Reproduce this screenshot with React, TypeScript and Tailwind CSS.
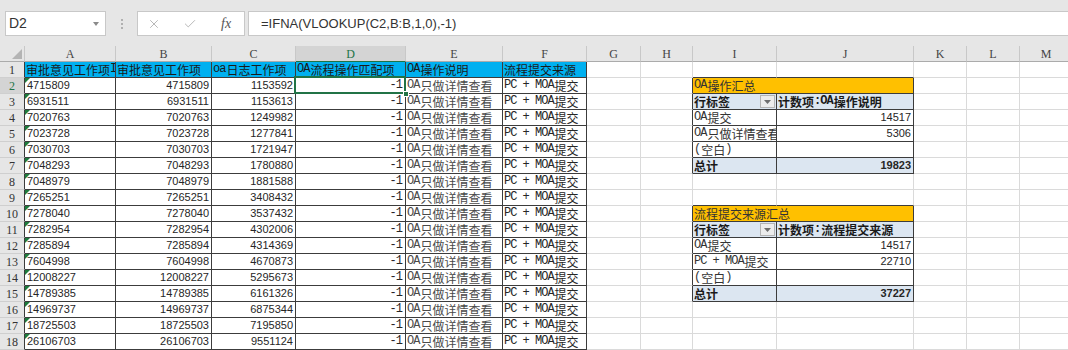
import { X, Check } from "lucide-react";

type PRow = { kind: "title" | "head" | "body" | "total"; a: string; b?: string };

const data: [string, string, string][] = [
  ["4715809", "4715809", "1153592"],
  ["6931511", "6931511", "1153613"],
  ["7020763", "7020763", "1249982"],
  ["7023728", "7023728", "1277841"],
  ["7030703", "7030703", "1721947"],
  ["7048293", "7048293", "1780880"],
  ["7048979", "7048979", "1881588"],
  ["7265251", "7265251", "3408432"],
  ["7278040", "7278040", "3537432"],
  ["7282954", "7282954", "4302006"],
  ["7285894", "7285894", "4314369"],
  ["7604998", "7604998", "4670873"],
  ["12008227", "12008227", "5295673"],
  ["14789385", "14789385", "6161326"],
  ["14969737", "14969737", "6875344"],
  ["18725503", "18725503", "7195850"],
  ["26106703", "26106703", "9551124"],
];

const headers = ["审批意见工作项ID", "审批意见工作项", "oa日志工作项", "OA流程操作匹配项", "OA操作说明", "流程提交来源"];
const letters = ["A", "B", "C", "D", "E", "F", "G", "H", "I", "J", "K", "L", "M"];

const pivot: Record<number, PRow> = {
  2: { kind: "title", a: "OA操作汇总" },
  3: { kind: "head", a: "行标签", b: "计数项:OA操作说明" },
  4: { kind: "body", a: "OA提交", b: "14517" },
  5: { kind: "body", a: "OA只做详情查看", b: "5306" },
  6: { kind: "body", a: "(空白)", b: "" },
  7: { kind: "total", a: "总计", b: "19823" },
  10: { kind: "title", a: "流程提交来源汇总" },
  11: { kind: "head", a: "行标签", b: "计数项:流程提交来源" },
  12: { kind: "body", a: "OA提交", b: "14517" },
  13: { kind: "body", a: "PC + MOA提交", b: "22710" },
  14: { kind: "body", a: "(空白)", b: "" },
  15: { kind: "total", a: "总计", b: "37227" },
};

const gridCols =
  "grid grid-cols-[25px_91px_96px_84px_110px_97px_84px_54px_52px_84px_137px_53px_53px_53px]";
const cjk = "font-['Noto_Sans_CJK_SC',sans-serif] text-[12px] leading-[15px]";
const num = "font-['Liberation_Sans',Arial,sans-serif] text-[11px] leading-[15px]";
const base = "relative flex items-end whitespace-nowrap h-[16px] border-r border-b";

// SimSun style: half-width latin runs, full-width CJK
const Song = ({ t }: { t: string }) => (
  <>
    {t
      .split(/([\x20-\x7e]+)/)
      .filter(Boolean)
      .map((p, i) =>
        /^[\x20-\x7e]+$/.test(p) ? (
          <span
            key={i}
            className="font-['Liberation_Mono',monospace] text-[12px] tracking-[-1px] mr-[1px] whitespace-pre"
          >
            {p}
          </span>
        ) : (
          <span key={i}>{p}</span>
        )
      )}
  </>
);

const Row = ({ r }: { r: number }) => {
  const cells = [];
  const p = pivot[r];
  cells.push(
    <div
      key="h"
      className={`h-[16px] border-r border-b border-r-[#3c3c3c] border-b-[#cfcfcf] flex items-center justify-center font-['Liberation_Serif',serif] text-[12px] ${
        r === 2 ? "bg-[#d4d4d4] text-[#217346]" : "bg-[#e6e6e6] text-[#333]"
      }`}
    >
      {r}
    </div>
  );
  for (let c = 1; c <= 13; c++) {
    const rightDark = c <= 6 || (!!p && (c === 8 || c === 9 || c === 10));
    const bottomDark = c <= 6 || ((c === 9 || c === 10) && ((r >= 1 && r <= 7) || (r >= 9 && r <= 15)));
    const bc = `${rightDark ? "border-r-[#3c3c3c]" : "border-r-[#dadada]"} ${
      bottomDark ? "border-b-[#3c3c3c]" : "border-b-[#dadada]"
    }`;

    if (r === 1 && c <= 6) {
      cells.push(
        <div key={c} className={`${base} ${bc} overflow-hidden bg-[#00b0f0] pl-[1px] text-[#1a1a1a] ${cjk}`}>
          <Song t={headers[c - 1]} />
        </div>
      );
      continue;
    }

    if (r >= 2 && c <= 6) {
      const d = data[r - 2];
      if (c === 1) {
        cells.push(
          <div key={c} className={`${base} ${bc} overflow-hidden pl-[2px] text-[#262626] ${num}`}>
            <span className="absolute left-0 top-0 w-0 h-0 border-t-[5px] border-t-[#1e7b3c] border-r-[5px] border-r-transparent" />
            {d[0]}
          </div>
        );
      } else if (c === 2 || c === 3) {
        cells.push(
          <div key={c} className={`${base} ${bc} overflow-hidden justify-end pr-[2px] text-[#262626] ${num}`}>
            {d[c - 1]}
          </div>
        );
      } else if (c === 4) {
        cells.push(
          <div
            key={c}
            className={`${base} ${bc} justify-end pr-[2px] text-[#262626] ${cjk} ${r === 2 ? "z-10" : "overflow-hidden"}`}
          >
            <Song t="-1" />
            {r === 2 && (
              <>
                <span className="absolute left-[-2px] top-[-2px] right-[-1px] bottom-[-1px] border-2 border-[#217346]" />
                <span className="absolute right-[-4px] bottom-[-4px] w-[6px] h-[6px] bg-[#217346] border border-white" />
              </>
            )}
          </div>
        );
      } else if (c === 5) {
        cells.push(
          <div key={c} className={`${base} ${bc} overflow-hidden pl-[1px] text-[#4a4a4a] ${cjk}`}>
            <Song t="OA只做详情查看" />
          </div>
        );
      } else {
        cells.push(
          <div key={c} className={`${base} ${bc} overflow-hidden pl-[1px] text-[#262626] ${cjk}`}>
            <Song t="PC + MOA提交" />
          </div>
        );
      }
      continue;
    }

    if (p && c === 9) {
      if (p.kind === "title") {
        cells.push(
          <div
            key={c}
            className={`${base} border-r-[#3c3c3c] border-b-[#3c3c3c] col-span-2 overflow-hidden bg-[#ffc000] pl-[1px] text-[#333] ${cjk}`}
          >
            <Song t={p.a} />
          </div>
        );
        c++;
        continue;
      }
      const shaded = p.kind === "head" || p.kind === "total";
      cells.push(
        <div
          key={c}
          className={`${base} ${bc} overflow-hidden pl-[1px] ${shaded ? "bg-[#dce6f1] font-bold text-[#1a1a1a]" : "text-[#333]"} ${cjk}`}
        >
          <Song t={p.a} />
          {p.kind === "head" && (
            <span className="absolute right-[1px] top-[1px] w-[15px] h-[13px] bg-[#ececec] border border-[#b4b4b4] flex items-center justify-center">
              <svg width="7" height="4" viewBox="0 0 7 4">
                <path d="M0 0h7L3.5 4z" fill="#6e6e6e" />
              </svg>
            </span>
          )}
        </div>
      );
      continue;
    }

    if (p && c === 10) {
      const shaded = p.kind === "head" || p.kind === "total";
      cells.push(
        <div
          key={c}
          className={`${base} ${bc} overflow-hidden ${shaded ? "bg-[#dce6f1] font-bold" : ""} ${
            p.kind === "head" ? `pl-[1px] text-[#1a1a1a] ${cjk}` : `justify-end pr-[2px] text-[#262626] ${num}`
          }`}
        >
          {p.kind === "head" ? <Song t={p.b || ""} /> : p.b}
        </div>
      );
      continue;
    }

    cells.push(<div key={c} className={`${base} ${bc}`} />);
  }
  return <>{cells}</>;
};

const App = () => {
  return (
    <div className="w-[1068px] h-[350px] overflow-hidden bg-white">
      <div className="h-[46px] bg-[#e6e6e6] flex items-start pt-[11px] pl-[5px]">
        <div className="w-[101px] h-[25px] bg-white border border-[#c8c8c8] flex items-center justify-between pl-[3px] pr-[6px]">
          <span className="font-['Liberation_Sans',Arial,sans-serif] text-[14px] text-[#333]">D2</span>
          <svg width="6" height="4" viewBox="0 0 6 4">
            <path d="M0 0h6L3 4z" fill="#8a8a8a" />
          </svg>
        </div>
        <div className="w-[31px] h-[25px] flex flex-col items-center justify-center gap-[2px]">
          <span className="w-[2px] h-[2px] bg-[#b0b0b0]" />
          <span className="w-[2px] h-[2px] bg-[#b0b0b0]" />
          <span className="w-[2px] h-[2px] bg-[#b0b0b0]" />
        </div>
        <div className="w-[108px] h-[25px] bg-white border border-[#c8c8c8] flex items-center pl-[9px]">
          <X size={14} strokeWidth={1.4} className="text-[#a8a8a8]" />
          <Check size={14} strokeWidth={1.4} className="text-[#a8a8a8] ml-[22px]" />
          <span className="ml-[24px] font-['Liberation_Serif',serif] italic text-[14px] text-[#555]">fx</span>
        </div>
        <div className="ml-[3px] flex-1 h-[25px] bg-white border border-r-0 border-[#c8c8c8] flex items-center pl-[12px] font-['Liberation_Sans',Arial,sans-serif] text-[13px] text-[#333]">
          =IFNA(VLOOKUP(C2,B:B,1,0),-1)
        </div>
      </div>
      <div className={gridCols}>
        <div className="h-[16px] border-r border-b border-r-[#c8c8c8] border-b-[#ababab] bg-[#e6e6e6] flex items-end justify-end pr-[2px] pb-[2px]">
          <svg width="10" height="10" viewBox="0 0 10 10">
            <path d="M10 0V10H0z" fill="#b4b4b4" />
          </svg>
        </div>
        {letters.map((l) => (
          <div
            key={l}
            className={`h-[16px] border-r border-b flex items-center justify-center font-['Liberation_Serif',serif] text-[12px] ${
              l === "D"
                ? "bg-[#d4d4d4] text-[#217346] border-r-[#c8c8c8] border-b-[#217346]"
                : "bg-[#e6e6e6] text-[#444] border-r-[#c8c8c8] border-b-[#ababab]"
            }`}
          >
            {l}
          </div>
        ))}
        {Array.from({ length: 18 }, (_, i) => (
          <Row key={i} r={i + 1} />
        ))}
      </div>
    </div>
  );
};

export default App;
